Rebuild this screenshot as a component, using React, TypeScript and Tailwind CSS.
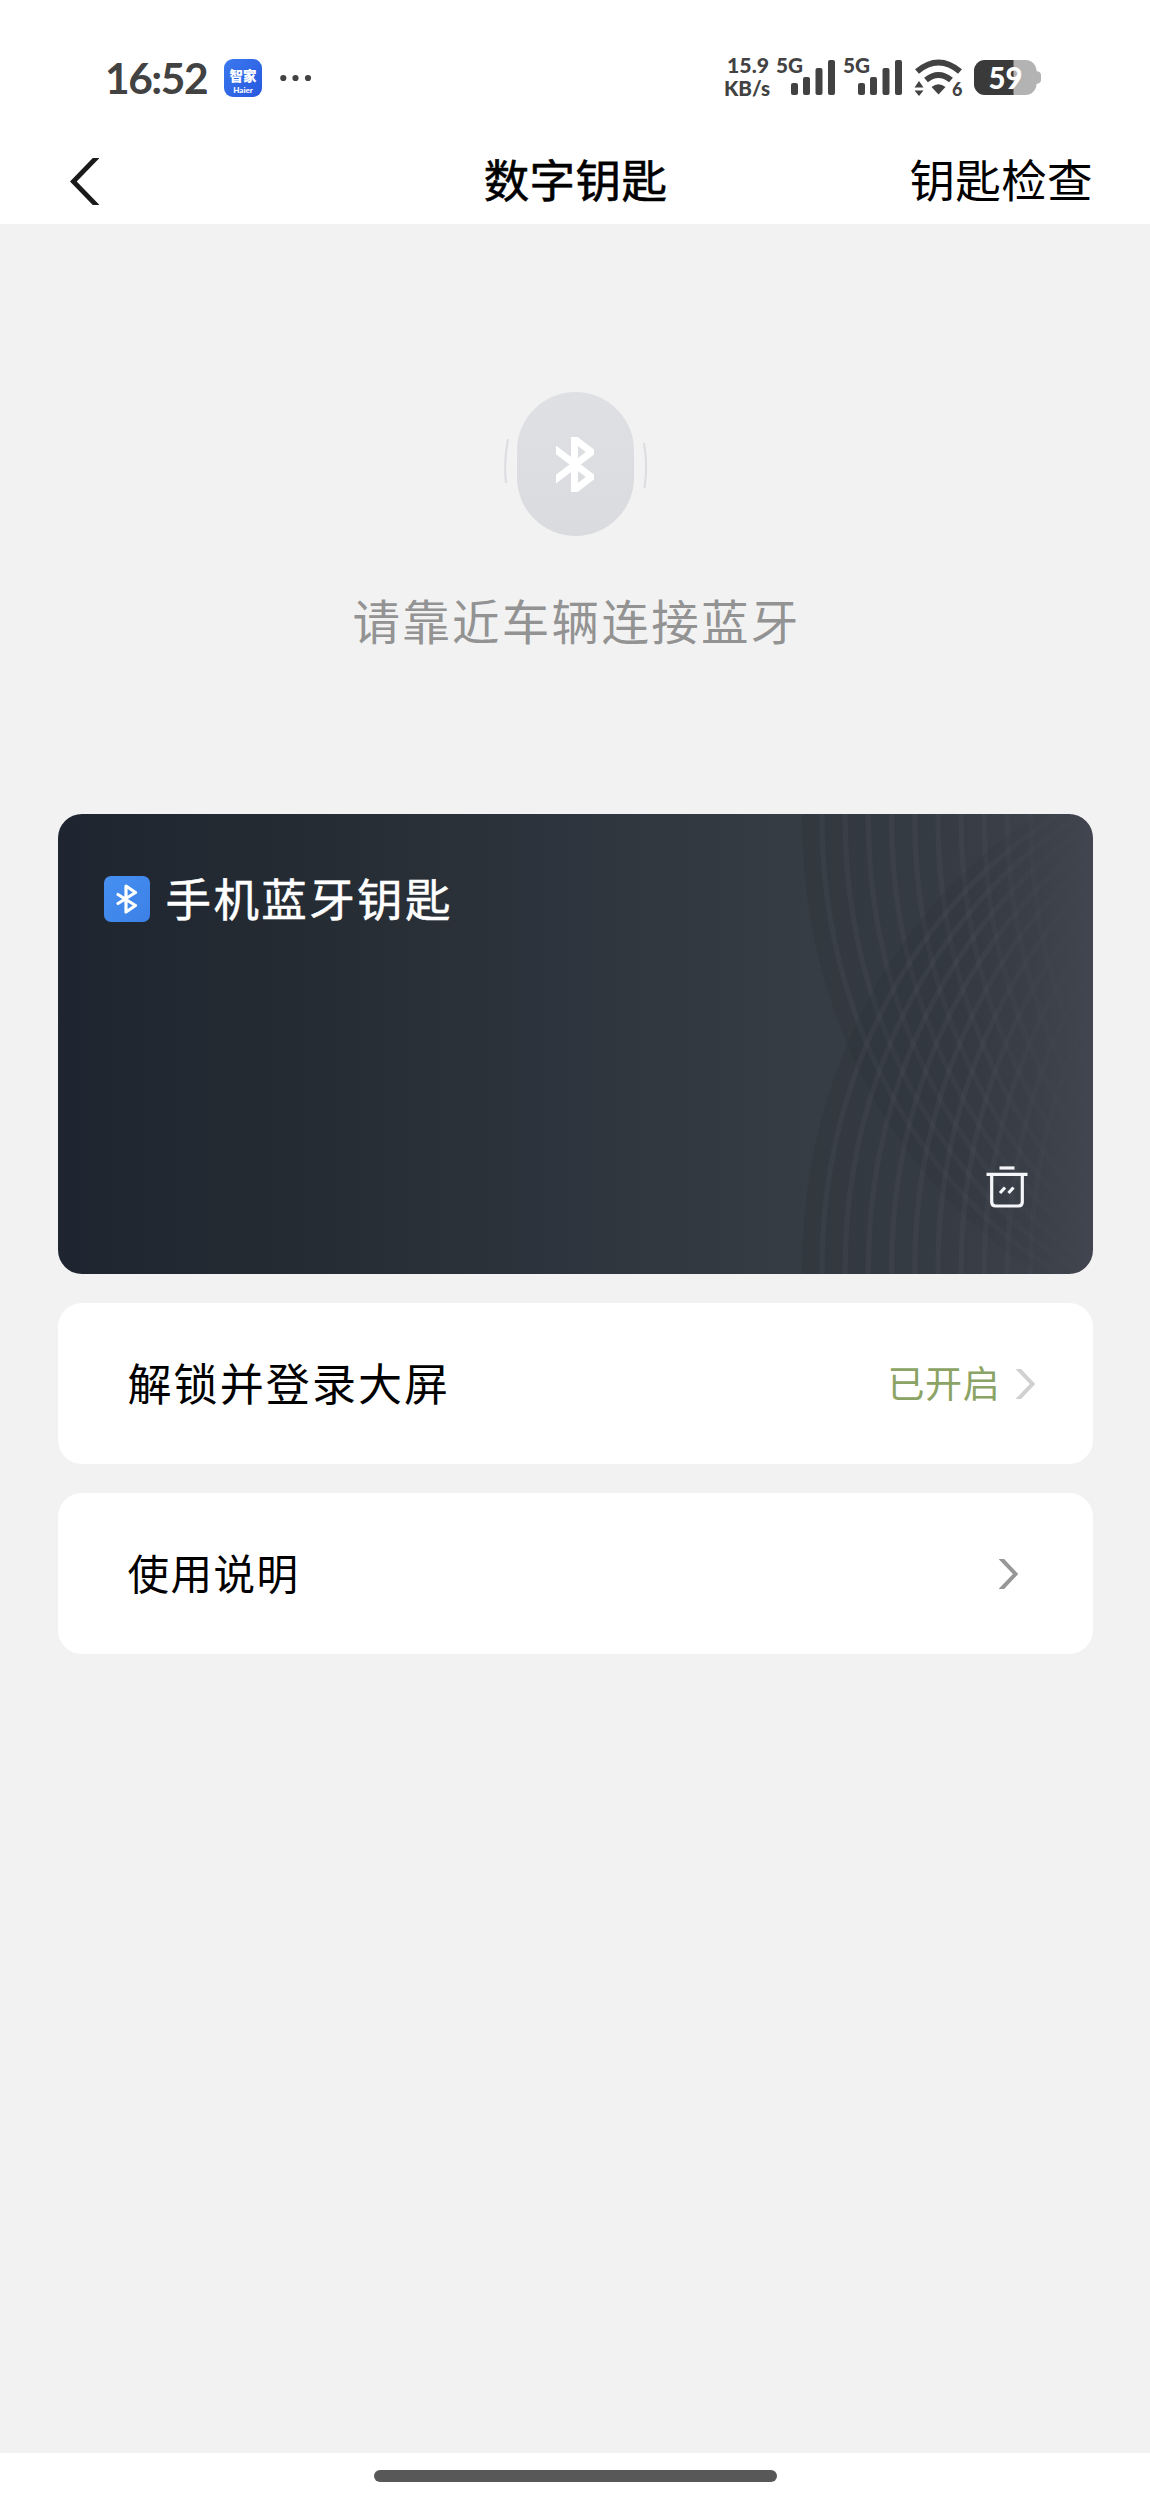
import type { ReactNode } from "react";

// Signal bars with the network label at the top left
function Signal() {
  return (
    <svg className="overflow-visible" width="60" height="42" viewBox="0 0 60 42" fill="#424242">
      <text x="0" y="17" fontSize="21" fontWeight="900" textLength="27" lengthAdjust="spacingAndGlyphs" fontFamily="Lato, sans-serif">
        5G
      </text>
      <rect x="15" y="27" width="7" height="12" rx="2" />
      <rect x="27" y="21" width="7" height="18" rx="2" />
      <rect x="39.5" y="12" width="7" height="27" rx="2" />
      <rect x="52" y="4" width="7" height="35" rx="2" />
    </svg>
  );
}

function Wifi() {
  return (
    <svg className="overflow-visible" width="49" height="42" viewBox="0 0 49 42" fill="#424242">
      <path d="M3 15.5 Q24.5 -2.5 46 15.5" fill="none" stroke="#424242" strokeWidth="6" />
      <path d="M12 24 Q24.5 14 37 24" fill="none" stroke="#424242" strokeWidth="6" />
      <path d="M17.5 31 Q24.5 25.5 31.5 31 L24.5 38.5 Z" />
      <path d="M0.5 31.5 L5 25 L9.5 31.5 Z M0.5 34.5 H9.5 L5 40 Z" />
      <text x="38" y="39.5" fontSize="18" fontWeight="900" fontFamily="Lato, sans-serif">
        6
      </text>
    </svg>
  );
}

function Battery() {
  return (
    <svg className="overflow-visible" width="68" height="42" viewBox="0 0 68 42">
      <defs>
        <clipPath id="battery-body">
          <rect x="0" y="4" width="62.5" height="35" rx="11" />
        </clipPath>
      </defs>
      <path d="M62 15 Q67 15.5 67 19 V24 Q67 27.5 62 28 Z" fill="#b3b3b3" />
      <g clipPath="url(#battery-body)">
        <rect width="68" height="42" fill="#b3b3b3" />
        <rect width="39.5" height="42" fill="#3a3a3a" />
      </g>
      <text x="14.5" y="32.5" fontSize="30" fontWeight="900" textLength="34" lengthAdjust="spacingAndGlyphs" fill="#fff" fontFamily="Lato, sans-serif">
        59
      </text>
    </svg>
  );
}

function StatusBar() {
  return (
    <div className="flex h-[140px] items-start justify-between pl-[105px] pr-[108px] pt-14 text-[#424242]">
      <div className="flex h-11 items-center">
        <span className="w-[119px] font-[Lato] text-[42.5px] font-bold leading-none tracking-[-1.5px]">16:52</span>
        <div className="flex size-[38px] flex-col items-center rounded-[9px] bg-linear-to-br from-[#3b78ee] to-[#2858df] pt-[7px] text-white">
          <span className="text-[13.5px] font-black leading-[19px]">智家</span>
          <span className="font-[Lato] text-[8px] font-black leading-[10px]">Haier</span>
        </div>
        <svg className="ml-[18px]" width="32" height="8" viewBox="0 0 32 8" fill="#424242">
          <circle cx="3.3" cy="4" r="3.1" />
          <circle cx="15.5" cy="4" r="3.1" />
          <circle cx="28" cy="4" r="3.1" />
        </svg>
      </div>
      <div className="flex items-start">
        <svg
          className="overflow-visible"
          width="52"
          height="42"
          viewBox="0 0 52 42"
          fill="#424242"
          fontFamily="Lato, sans-serif"
          fontWeight="900"
          fontSize="21"
        >
          <text x="3" y="17" textLength="42" lengthAdjust="spacingAndGlyphs">15.9</text>
          <text x="0" y="39.5" textLength="46" lengthAdjust="spacingAndGlyphs" fontSize="20">KB/s</text>
        </svg>
        <div className="flex gap-[7px]">
          <Signal />
          <Signal />
        </div>
        <div className="ml-[11px] flex gap-[11px]">
          <Wifi />
          <Battery />
        </div>
      </div>
    </div>
  );
}

function Chevron({ color }: { color: string }) {
  return (
    <svg width="19" height="30" viewBox="0 0 19 30" fill="none" stroke={color} strokeWidth="4">
      <path d="M0.5 -2 L16.5 15 L0.5 32" />
    </svg>
  );
}

// The same ring shape repeated to the right, once from the top edge and once from the bottom
function CardRings() {
  const rings = Array.from({ length: 10 }, (_, i) => 484 + 23.2 * i);
  return (
    <svg className="absolute right-0 top-0" width="305" height="460" viewBox="0 0 305 460">
      <defs>
        <linearGradient id="disc" gradientUnits="userSpaceOnUse" x1="0" y1="0" x2="305" y2="0">
          <stop offset="0" stopColor="#262e33" stopOpacity="0.28" />
          <stop offset="0.55" stopColor="#2a3036" stopOpacity="0.22" />
          <stop offset="1" stopColor="#2a3036" stopOpacity="0" />
        </linearGradient>
        <linearGradient id="ring" gradientUnits="userSpaceOnUse" x1="0" y1="0" x2="305" y2="0">
          <stop offset="0" stopColor="#505663" stopOpacity="0.2" />
          <stop offset="0.6" stopColor="#565966" stopOpacity="0.18" />
          <stop offset="1" stopColor="#565966" stopOpacity="0" />
        </linearGradient>
      </defs>
      {[6, 454].map((cy) => (
        <g key={cy}>
          <ellipse cx="464" cy={cy} rx="450" ry="515" fill="url(#disc)" />
          {rings.map((cx) => (
            <ellipse key={cx} cx={cx} cy={cy} rx="450" ry="515" fill="none" stroke="url(#ring)" strokeWidth="5" />
          ))}
        </g>
      ))}
    </svg>
  );
}

function KeyCard() {
  return (
    <div className="relative flex h-[460px] flex-col justify-between overflow-hidden rounded-3xl bg-[linear-gradient(90deg,#1f2530_0%,#252c33_25%,#2d343d_48%,#363c43_70%,#393f47_85%,#42454f_100%)]">
      <CardRings />
      <div className="flex items-center pl-[46px] pt-[62px]">
        <div className="flex size-[46px] items-center justify-center rounded-[7px] bg-linear-to-br from-[#4690f2] to-[#3c80e6]">
          <svg
            width="22"
            height="30"
            viewBox="0 0 22 30"
            fill="none"
            stroke="#fff"
            strokeWidth="3.2"
            strokeLinecap="round"
            strokeLinejoin="round"
          >
            <path d="M2 10.5 L19.5 21.5 L10 28 V2 L19.5 8.500 L2 19.5" />
          </svg>
        </div>
        <h2 className="-mt-[5px] ml-[16px] text-[45.5px] leading-[50px] tracking-[2.4px] text-white [-webkit-text-stroke:0.5px_white]">
          手机蓝牙钥匙
        </h2>
      </div>
      <button className="relative mb-[66px] mr-[65px] self-end">
        <svg width="42" height="42" viewBox="0 0 42 42" fill="none" stroke="#f4f6fa" strokeWidth="3.2">
          <path d="M13.5 2 H28.5" />
          <path d="M0.5 8.3 H41.5" />
          <path d="M5.7 9 V36 Q5.7 40 9.7 40 H32.3 Q36.3 40 36.3 36 V9" />
          <path d="M14 27 L19 21.5 M22.5 27 L27.5 21.5" />
        </svg>
      </button>
    </div>
  );
}

function Row({ className, children }: { className: string; children: ReactNode }) {
  return <div className={`flex h-[161px] items-center justify-between rounded-3xl bg-white pl-[70px] ${className}`}>{children}</div>;
}

export default function App() {
  return (
    <div className="flex h-[2499px] w-[1150px] flex-col bg-[#f2f2f2] font-['Noto_Sans_CJK_SC',sans-serif] text-black">
      <header className="h-[224px] bg-white">
        <StatusBar />
        <nav className="flex h-[84px] items-center justify-between pl-[70px] pr-[57px]">
          <div className="flex-1">
            <svg className="-mt-[2px]" width="29" height="47" viewBox="0 0 29 47" fill="none" stroke="#1a1a1a" strokeWidth="4.8">
              <path d="M28 -2 L3.3 23.5 L28 49" />
            </svg>
          </div>
          <h1 className="-mt-[8px] mr-[12px] text-[45.5px] leading-[52px] tracking-[0.4px] [-webkit-text-stroke:0.6px_black]">数字钥匙</h1>
          <span className="-mt-[8px] flex-1 text-right text-[45.5px] leading-[52px] tracking-[0.4px]">钥匙检查</span>
        </nav>
      </header>

      <main className="flex-1 px-[57.5px]">
        <section className="flex h-[590px] flex-col items-center pt-[168px]">
          <div className="flex items-center">
            <svg width="12" height="50" viewBox="0 0 12 50" fill="none" stroke="#dcdde0" strokeWidth="2">
              <path d="M5 0 Q0.5 22 3 44" />
            </svg>
            <div className="mx-[2px] flex h-[144px] w-[117px] items-center justify-center rounded-full bg-linear-to-b from-[#dfe0e4] to-[#dadbdf]">
              <svg width="38" height="55" viewBox="0 0 38 55" fill="none" stroke="#fff" strokeWidth="7">
                <path d="M-3 10.5 L35.5 40 L18.5 53 V2 L35.5 15 L-3 44.5" />
              </svg>
            </div>
            <svg width="12" height="50" viewBox="0 0 12 50" fill="none" stroke="#dcdde0" strokeWidth="2">
              <path d="M8 4 Q12 26 8.5 49" />
            </svg>
          </div>
          <p className="ml-[3px] mt-[56px] text-[47.5px] leading-[56px] tracking-[2.3px] text-[#939393]">请靠近车辆连接蓝牙</p>
        </section>

        <div className="flex flex-col gap-[29px]">
          <KeyCard />
          <Row className="pr-[58px]">
            <span className="-mt-[4px] text-[44px] leading-[52px] tracking-[2.1px]">解锁并登录大屏</span>
            <span className="flex items-center gap-[15px] text-[37px] leading-[44px] tracking-[0.7px] text-[#8ba364]">
              <span className="-mt-[3px]">已开启</span>
              <Chevron color="#d0d0d0" />
            </span>
          </Row>
          <Row className="pr-[75px]">
            <span className="-mt-[4px] text-[41.5px] leading-[52px] tracking-[1.5px]">使用说明</span>
            <Chevron color="#979797" />
          </Row>
        </div>
      </main>

      <footer className="flex h-[46px] justify-center bg-white pt-[17px]">
        <div className="h-3 w-[403px] rounded-full bg-[#585858]" />
      </footer>
    </div>
  );
}
